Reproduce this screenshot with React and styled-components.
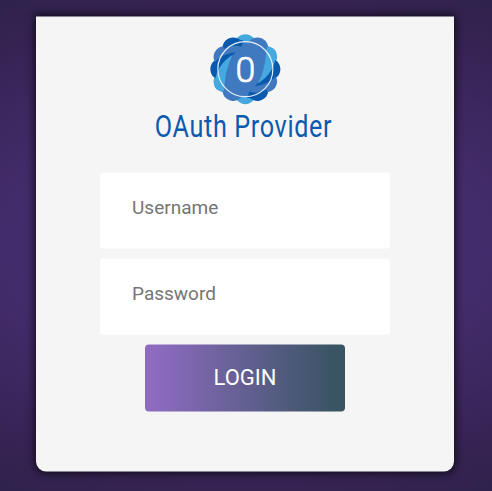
import React from "react";
import styled, { createGlobalStyle } from "styled-components";

const GlobalStyle = createGlobalStyle`
  *, *::before, *::after { box-sizing: border-box; }
  html, body { margin: 0; height: 100%; }
  body { font-family: Roboto, sans-serif; overflow: hidden; }
`;

const Page = styled.main`
  display: flex;
  justify-content: center;
  align-items: flex-start;
  width: 492px;
  height: 491px;
  padding: 16px 2px 0 0;
  background: radial-gradient(ellipse 600px 345px at 50% 50%, #4a3074 0%, #432c6b 40%, #362353 70%, #2b2149 90%);
`;

const Card = styled.form`
  display: flex;
  flex-direction: column;
  align-items: center;
  width: 418px;
  height: 455px;
  padding-top: 11.5px;
  background: #f5f5f5;
  border-radius: 0 0 10px 10px;
  box-shadow: 0 0 10px 1px rgba(0, 0, 0, 0.75);
  transform: translateY(0.5px);
`;

const Emblem = styled.svg`
  display: block;
  flex: none;
  width: 90px;
  height: 84px;
`;

const Title = styled.h1`
  margin: -4px 0 0;
  height: 36px;
  color: #0b5aae;
  font-size: 30.5px;
  line-height: 36px;
  font-weight: 400;
  letter-spacing: 0.8px;
  white-space: nowrap;
  transform: translate(-1px, 0.5px) scaleX(0.825);
`;

const Fields = styled.div`
  display: flex;
  flex-direction: column;
  gap: 10px;
  margin-top: 28.5px;
`;

const Field = styled.input`
  display: block;
  width: 290px;
  height: 76px;
  padding: 0 32px 8px;
  border: 0;
  border-radius: 3px;
  outline: 0;
  background: #fff;
  color: #333;
  font: 400 19px/24px Roboto, sans-serif;
  &::placeholder { color: #757575; opacity: 1; }
`;

const LoginButton = styled.button`
  width: 200px;
  height: 67px;
  margin-top: 10px;
  padding: 0 0 2px;
  border: 0;
  border-radius: 4px;
  color: #fff;
  background: linear-gradient(90deg, #8e6bc1 0%, #8e6bc1 4%, #395462 95%);
  font: 400 22px/26px Roboto, sans-serif;
`;

const LIGHT = "#45a9df";
const MID = "#3f79bf";
const DARK = "#0959ac";
const petals = [LIGHT, MID, LIGHT, DARK, MID, DARK];
const petalOrder = [0, 6, 2, 8, 3, 9, 5, 11, 1, 7, 4, 10];

function HalfRosette() {
  return (
    <>
      <path fill={DARK} d="M38 112 C46 94 68 77 107 72 C94 88 73 108 58 148 L42 142 Z" />
      <path fill={LIGHT} d="M43 169 C47 132 63 101 99 79 C80 113 75 150 72 188 C53 190 43 181 43 169 Z" />
      <path fill={DARK} d="M69 54 C76 31 96 27 131 38 L124 56 C108 50 92 52 72 62 Z" />
    </>
  );
}

function ProviderEmblem() {
  return (
    <Emblem viewBox="0 1 270 252" aria-hidden="true">
      {petalOrder.map((i) => {
        const angle = (i * Math.PI) / 6;
        return (
          <circle
            key={i}
            cx={136 + 73 * Math.sin(angle)}
            cy={123 - 73 * Math.cos(angle)}
            r="32"
            fill={petals[i % 6]}
          />
        );
      })}
      <circle cx="136" cy="123" r="81" fill={MID} />
      <HalfRosette />
      <g transform="rotate(180 136 123)"><HalfRosette /></g>
      <circle cx="136" cy="123" r="82.5" fill="none" stroke="#e5eff9" strokeWidth="3.5" />
      <text x="136" y="161" textAnchor="middle" fill="#fff" fontFamily="Roboto" fontWeight="300" fontSize="107" stroke="#fff" strokeWidth="2.2">0</text>
    </Emblem>
  );
}

export default function App() {
  return (
    <>
      <GlobalStyle />
      <Page>
        <Card onSubmit={(event) => event.preventDefault()}>
          <ProviderEmblem />
          <Title>OAuth Provider</Title>
          <Fields>
            <Field type="text" placeholder="Username" aria-label="Username" />
            <Field type="password" placeholder="Password" aria-label="Password" />
          </Fields>
          <LoginButton type="submit">LOGIN</LoginButton>
        </Card>
      </Page>
    </>
  );
}
